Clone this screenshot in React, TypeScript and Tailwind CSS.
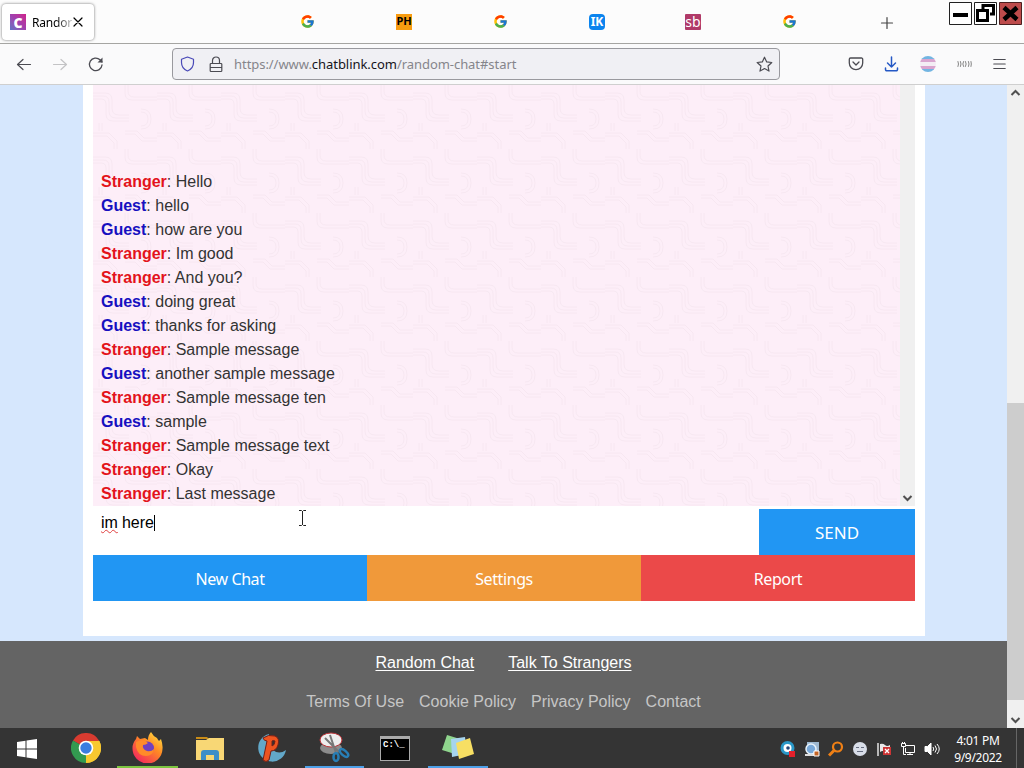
import React from "react";
import { FcGoogle } from "react-icons/fc";

interface Message {
  from: "a" | "b";
  text: string;
}

const names = { a: "Stranger", b: "Guest" };

const messages: Message[] = [
  { from: "a", text: "Hello" },
  { from: "b", text: "hello" },
  { from: "b", text: "how are you" },
  { from: "a", text: "Im good" },
  { from: "a", text: "And you?" },
  { from: "b", text: "doing great" },
  { from: "b", text: "thanks for asking" },
  { from: "a", text: "Sample message" },
  { from: "b", text: "another sample message" },
  { from: "a", text: "Sample message ten" },
  { from: "b", text: "sample" },
  { from: "a", text: "Sample message text" },
  { from: "a", text: "Okay" },
  { from: "a", text: "Last message" },
];

const stroke = {
  fill: "none",
  stroke: "currentColor",
  strokeLinecap: "round" as const,
  strokeLinejoin: "round" as const,
};

const TabBar: React.FC = () => (
  <div className="flex h-11 border-b border-[#a5a5a2] bg-[#fcfcfc]">
    <div className="mt-1 ml-0.5 flex h-9 w-[92px] items-center rounded bg-white pl-2 shadow-[0_0_3px_rgba(0,0,0,0.55)]">
      <span className="flex size-4 items-center justify-center bg-linear-to-tr from-[#5b72c4] via-[#a13fae] to-[#d01c8b] text-[14px] font-black text-white">
        C
      </span>
      <span className="ml-1.5 w-[41px] bg-linear-to-r from-black from-50% to-[#ddd] bg-clip-text pt-0.5 text-[12px] tracking-[-0.2px] whitespace-nowrap text-transparent">
        Randor
      </span>
      <svg width="10" height="10" viewBox="0 0 10 10" {...stroke}>
        <path d="M1 1l8 8M9 1l-8 8" strokeWidth="1.2" />
      </svg>
    </div>
    <div className="ml-[205px] flex h-[43px] items-center">
      <span className="flex w-[97px] pl-px"><FcGoogle size={15} /></span>
      <span className="flex w-[96px]">
        <span className="flex size-4 items-center justify-center bg-[#f89c10] text-[11px] font-bold">PH</span>
      </span>
      <span className="flex w-[97px] pl-px"><FcGoogle size={15} /></span>
      <span className="flex w-[96px]">
        <span className="flex size-4 items-center justify-center rounded-sm bg-[#0b84ee] text-[12px] font-bold text-white">IK</span>
      </span>
      <span className="flex w-[96px]">
        <span className="flex size-4 items-center justify-center rounded-[1px] bg-[#b03a68] text-[14px] text-white">sb</span>
      </span>
      <span className="flex w-[99px] pl-px"><FcGoogle size={15} /></span>
      <svg width="14" height="14" viewBox="0 0 14 14" className="mt-0.5 text-[#444]" {...stroke}>
        <path d="M7 1.500v11M1.500 7h11" strokeWidth="1.2" />
      </svg>
    </div>
    <div className="mt-0.5 ml-auto flex gap-0.5 pr-0.5">
      <svg width="23" height="23" viewBox="0 0 23 23">
        <path d="M.5.5h22v22H.5z" fill="#fff" stroke="#222" />
        <path d="M4 11h15v4H4z" />
      </svg>
      <svg width="23" height="23" viewBox="0 0 23 23" fill="none">
        <path d="M.5.5h22v22H.5z" fill="#fff" stroke="#222" />
        <path d="M9 7V3.5h10.5V12H16M3.5 8.5h10v10h-10z" stroke="#000" strokeWidth="3" />
      </svg>
      <svg width="23" height="23" viewBox="0 0 23 23">
        <path d="M.5.5h22v22H.5z" fill="#bd4b4b" stroke="#4b2020" />
        <path d="M5 5.5l13 12M18 5.5l-13 12" stroke="#000" strokeWidth="4.5" />
      </svg>
    </div>
  </div>
);

const Toolbar: React.FC = () => (
  <div className="flex h-[41px] items-center border-b border-[#cfcfcf] bg-[#fafafb] text-[#4b4b52]">
    <svg width="16" height="16" viewBox="0 0 16 16" className="ml-4" {...stroke}>
      <path d="M14.500 8.500h-13M7 3.500l-5.500 5 5.500 5" strokeWidth="1.2" />
    </svg>
    <svg width="16" height="16" viewBox="0 0 16 16" className="ml-5 text-[#c3c3c5]" {...stroke}>
      <path d="M1.500 8.500h13M9 3.500l5.500 5-5.500 5" strokeWidth="1.2" />
    </svg>
    <svg width="16" height="16" viewBox="0 0 16 16" className="ml-5" {...stroke}>
      <path d="M14 9a6.300 6.300 0 1 1-2-5.300L14 6" strokeWidth="1.3" />
      <path d="M14.500 1.500V6.500h-5z" fill="currentColor" stroke="none" />
    </svg>
    <div className="ml-[68px] flex h-8 w-[608px] items-center rounded border border-[#99999e] bg-[#f0f0f4] pl-[7px]">
      <svg width="15" height="16" viewBox="0 0 15 16" className="text-[#4a4ab8]" {...stroke}>
        <path d="M7.500 1l6 2.200v3.300c0 4-2.300 7-6 8.500-3.700-1.500-6-4.500-6-8.500V3.200z" strokeWidth="1.200" />
      </svg>
      <svg width="14" height="17" viewBox="0 0 14 17" className="ml-3.5" {...stroke}>
        <path d="M2 7.500h10a.8.800 0 0 1 .8.800v6.400a.8.800 0 0 1-.8.800H2a.8.800 0 0 1-.8-.800V8.300A.8.800 0 0 1 2 7.500zM3.500 7.500V4.500a3.500 3.500 0 0 1 7 0v3M1.500 11.500h11" strokeWidth="1.200" />
      </svg>
      <span className="ml-[11px] pt-0.5 text-[13px] tracking-[-0.05px] whitespace-nowrap text-[#85858b]">
        https://www.<span className="text-[#15141a]">chatblink.com</span>/random-chat#start
      </span>
      <svg width="17" height="17" viewBox="0 0 17 17" className="mr-1.5 ml-auto" {...stroke}>
        <path d="M8.500 1.200l2.200 4.700 5.100.6-3.800 3.500 1 5.100-4.500-2.500L4 15.100l1-5.100L1.200 6.500l5.100-.6z" strokeWidth="1.200" />
      </svg>
    </div>
    <svg width="16" height="14" viewBox="0 0 16 14" className="ml-[68px]" {...stroke}>
      <path d="M2.500 1h11a1.200 1.200 0 0 1 1.200 1.200V6a6.700 6.700 0 0 1-13.400 0V2.200A1.200 1.200 0 0 1 2.500 1zM5 5l3 3 3-3" strokeWidth="1.300" />
    </svg>
    <svg width="16" height="16" viewBox="0 0 16 16" className="ml-5 text-[#2458c5]" {...stroke}>
      <path d="M7.500 1v10M3.500 7l4 4 4-4M1.500 12v1.500a1.200 1.200 0 0 0 1.200 1.200h9.600a1.200 1.200 0 0 0 1.200-1.200V12" strokeWidth="1.500" />
    </svg>
    <span className="ml-5 size-4 overflow-hidden rounded-full">
      <span className="block h-[3px] bg-[#72b5e2]" />
      <span className="block h-[3px] bg-[#d9a5cf]" />
      <span className="block h-1 bg-[#f3edf4]" />
      <span className="block h-[3px] bg-[#d9a5cf]" />
      <span className="block h-[3px] bg-[#72b5e2]" />
    </span>
    <svg width="15" height="8" viewBox="0 0 15 8" className="ml-[21px] text-[#777]" {...stroke}>
      <path d="M1 1.500q1.200 2.500 0 5M3.500 1.500q1.200 2.500 0 5M6.500 1.500q-1.500 2.500 0 5M8.500 1.500q1.500 2.500 0 5M11.500 1.500q1.200 2.500 0 5M14 1.500q.8 2.500 0 5" strokeWidth=".9" />
    </svg>
    <svg width="13" height="12" viewBox="0 0 13 12" className="ml-[21px]" {...stroke}>
      <path d="M.8 1.500h11.400M.8 6h11.400M.8 10.500h11.400" strokeWidth="1.200" />
    </svg>
  </div>
);

const Chevron: React.FC<{ up?: boolean }> = ({ up }) => (
  <svg width="11" height="8" viewBox="0 0 11 8" fill="none" stroke="#505050" strokeWidth="2">
    <path d={up ? "M1.500 6l4-4 4 4" : "M1.500 2l4 4 4-4"} />
  </svg>
);

// faint maze lines tiled behind the messages
const ChatPattern: React.FC = () => (
  <svg className="absolute inset-0 h-full w-full">
    <defs>
      <pattern id="maze" width="64" height="64" patternUnits="userSpaceOnUse">
        <g fill="none" stroke="#f5e4ef" strokeWidth=".8">
          <path d="M0 8h12q7 0 7 7v8q0 7 7 7h10M0 11h10q6 0 6 6v9q0 7 7 7h13M0 14h8q5 0 5 5v10q0 7 7 7h16" />
          <path d="M32 0v8q0 7 7 7h25M35 0v6q0 6 6 6h23M48 24q10 0 10 10t-10 10M48 27q7 0 7 7t-7 7" />
          <path d="M0 48h16l8 8v8M0 51h14l7 7v6M32 46h12l7 7h13M32 49h10l7 7h15M6 38v8M9 38v8" />
        </g>
      </pattern>
    </defs>
    <rect width="100%" height="100%" fill="url(#maze)" />
  </svg>
);

const Chat: React.FC = () => (
  <div className="flex h-[421px] w-[822px]">
    <div className="relative w-[807px] bg-[#fdeef8] pt-[85px] pl-2">
      <ChatPattern />
      <div className="relative">
        {messages.map((m, i) => (
          <p key={i} className="h-6 text-base leading-6 text-[#333]">
            <b className={m.from === "a" ? "text-[#e3131b]" : "text-[#1610c0]"}>{names[m.from]}</b>: {m.text}
          </p>
        ))}
      </div>
    </div>
    <div className="flex w-[15px] items-end justify-center bg-[#f0f0f0] pb-1">
      <Chevron />
    </div>
  </div>
);

const Page: React.FC = () => (
  <div className="h-[643px] w-[1007px] bg-[#d6e7fd] font-['Liberation_Sans',sans-serif]">
    <div className="ml-[83px] h-[551px] w-[842px] bg-white px-2.5">
      <Chat />
      <div className="flex h-[49px] pt-[3px]">
        <div className="flex w-[666px] pt-0.5 pl-2 text-base leading-6 text-black">
          <span className="h-6 underline decoration-[#e04040] decoration-wavy decoration-1 underline-offset-1">im</span>
          <span className="ml-1">here</span>
          <span className="mt-1 h-4 w-px bg-black" />
          <svg width="9" height="16" viewBox="0 0 9 16" className="-mt-px ml-[143px]" fill="none" stroke="#222">
            <path d="M1 .5h2.500l1 1 1-1H8M4.500 1v14M1 15.500h2.500l1-1 1 1H8" />
          </svg>
        </div>
        <button className="w-[156px] bg-[#2196f3] pt-0.5 font-['Noto_Sans',sans-serif] text-[17px] text-white">SEND</button>
      </div>
      <div className="grid h-[46px] grid-cols-3 font-['Noto_Sans',sans-serif] text-base tracking-tight text-white">
        <button className="bg-[#2196f3] pt-0.5">New Chat</button>
        <button className="bg-[#f0993a] pt-0.5">Settings</button>
        <button className="bg-[#eb4949] pt-0.5">Report</button>
      </div>
    </div>
    <footer className="mt-[5px] h-[87px] bg-[#646464] text-base leading-6">
      <div className="flex justify-center gap-[34px] pt-2.5 text-white underline underline-offset-2">
        <span>Random Chat</span>
        <span>Talk To Strangers</span>
      </div>
      <div className="mt-[15px] flex justify-center gap-[15px] text-[#c6c6c6]">
        <span>Terms Of Use</span>
        <span>Cookie Policy</span>
        <span>Privacy Policy</span>
        <span>Contact</span>
      </div>
    </footer>
  </div>
);

const Taskbar: React.FC = () => (
  <div className="flex h-10 bg-[#343434] text-white">
    <div className="flex w-[55px] items-center justify-center pt-0.5">
      <svg width="20" height="20" viewBox="0 0 20 20" fill="#fff" className="-ml-0.5">
        <path d="M0 3l8.500-1.200v7.700H0zM9.500 1.600L20 0v9.500H9.500zM0 10.500h8.500v7.700L0 17zM9.500 10.500H20V20L9.500 18.400z" />
      </svg>
    </div>
    <div className="flex w-[62px] items-center justify-center">
      <svg width="30" height="30" viewBox="0 0 30 30">
        <path d="M15 15L2 7.500A15 15 0 0 1 28 7.500z" fill="#d83b30" />
        <path d="M15 15L28 7.500A15 15 0 0 1 15 30z" fill="#f8c82f" />
        <path d="M15 15v15A15 15 0 0 1 2 7.500z" fill="#339a50" />
        <path d="M15 8h13.300A15 15 0 0 1 15 30l6-12z" fill="#f8c82f" />
        <circle cx="15" cy="15" r="7.300" fill="#fff" />
        <circle cx="15" cy="15" r="5.700" fill="#3b7de0" />
      </svg>
    </div>
    <div className="flex w-[61px] items-center justify-center border-b-2 border-[#7cc540]">
      <svg width="31" height="31" viewBox="0 0 31 31">
        <defs>
          <linearGradient id="fox" x1="1" y1="0" x2=".2" y2="1">
            <stop offset="0" stopColor="#fff047" />
            <stop offset=".45" stopColor="#ff8a24" />
            <stop offset="1" stopColor="#f32360" />
          </linearGradient>
        </defs>
        <path d="M19 0q2 4 6 6 1 2 2 3l2-2q2 6 1.500 10A15 15 0 0 1 .5 16Q.5 11 4 7l1-3 3 3 5-1 3 2q0-5 3-8z" fill="url(#fox)" />
        <circle cx="15.500" cy="16" r="6.500" fill="#7040be" />
        <path d="M4 10q7-4 12 1-2 2-5 2-1 4 4 6 4 1 7-2-1 7-8 7-8 0-10-9z" fill="#ff8b29" />
      </svg>
    </div>
    <div className="flex w-[63px] items-center justify-center">
      <svg width="28" height="25" viewBox="0 0 28 25">
        <path d="M0 1h11l2 2H0z" fill="#c98c17" />
        <path d="M0 4h10l3-2h15v22H0z" fill="#f8d775" />
        <path d="M5 24v-7q0-3 3-3h12q3 0 3 3v7h-5v-5h-8v5z" fill="#3d8ec8" />
      </svg>
    </div>
    <div className="flex w-[61px] items-center justify-center">
      <svg width="31" height="31" viewBox="0 0 31 31">
        <path d="M13 1A14 14 0 1 0 30 17q-7 5-13 0T13 1z" fill="#62a8c9" />
        <path d="M7 27l4-19q-3 0-4-3 5-4 12-2 5 2 3 9-2 6-7 6l-2 9q-3 3-6 0zm9-14q3-1 3-5-2-1-3 0z" fill="#ee5420" stroke="#742018" />
      </svg>
    </div>
    <div className="ml-[3px] flex w-[59px] items-center justify-center border-b-2 border-[#4da0e8]">
      <svg width="31" height="31" viewBox="0 0 31 31" fill="none">
        <ellipse cx="12" cy="16" rx="11" ry="6" fill="#8c8c8c" />
        <ellipse cx="12" cy="8" rx="11" ry="7" fill="#eee" stroke="#bc3338" />
        <path d="M6 6l14 14M11 3l6 18" stroke="#777" strokeWidth="2" />
        <ellipse cx="17" cy="25" rx="2.500" ry="4" stroke="#287eb5" strokeWidth="2.500" />
        <ellipse cx="25" cy="21" rx="2.500" ry="5" transform="rotate(-50 25 21)" stroke="#287eb5" strokeWidth="2.500" />
      </svg>
    </div>
    <div className="flex w-[62px] items-center justify-center">
      <span className="h-[25px] w-[30px] border border-[#aaa] border-t-[3px] bg-black pl-0.5 font-['Liberation_Mono',monospace] text-[9px] leading-[13px] font-bold">
        C:\_
      </span>
    </div>
    <div className="ml-0.5 flex w-[60px] items-center justify-center border-b-2 border-[#4da0e8]">
      <svg width="32" height="25" viewBox="0 0 32 25">
        <path d="M5 0l13 4-5 15L0 15z" fill="#8fd58d" />
        <path d="M9 4l14-2 2 17-15 3z" fill="#a6d4ee" />
        <path d="M14 8l14-5 4 16-15 5z" fill="#f7df63" />
      </svg>
    </div>
    <div className="ml-auto flex items-center gap-2 pt-0.5">
      <svg width="16" height="16" viewBox="0 0 16 16">
        <circle cx="7.500" cy="7" r="7" fill="#2a98c8" />
        <circle cx="7.500" cy="7" r="4" fill="#fff" />
        <circle cx="8" cy="7" r="1.800" fill="#247" />
        <path d="M9 10h6v6H9z" fill="#e3202b" />
      </svg>
      <svg width="16" height="16" viewBox="0 0 16 16">
        <path d="M3 1h12v10H3z" fill="#9db8d0" />
        <circle cx="7" cy="8" r="5" fill="#78a8d8" stroke="#e8f2fa" strokeWidth="1.500" />
        <path d="M1 13h9v2H1z" fill="#ddd" />
        <path d="M10 10h5v5h-5z" fill="#c46424" stroke="#fff" />
      </svg>
      <svg width="16" height="16" viewBox="0 0 16 16" fill="none" stroke="#f08015">
        <circle cx="9.500" cy="6" r="4.500" strokeWidth="2.200" />
        <path d="M6 9.500l-5 5" strokeWidth="3" />
      </svg>
      <svg width="16" height="16" viewBox="0 0 16 16">
        <circle cx="8" cy="8" r="7" fill="#d8dde8" />
        <path d="M4 6.500h3M9 6.500h3M5 10.500h6" stroke="#666d80" />
      </svg>
      <svg width="16" height="16" viewBox="0 0 16 16">
        <path d="M2 2v13" stroke="#fff" strokeWidth="1.300" />
        <path d="M4 3q3-1 5 1t5 0v7q-3 2-5 0t-5 0z" fill="#e9e9e9" />
        <path d="M7 6h8v8H7z" fill="#cc3434" />
        <path d="M9 8l4 4M13 8l-4 4" stroke="#fff" strokeWidth="1.300" />
      </svg>
      <svg width="16" height="16" viewBox="0 0 16 16" fill="none" stroke="#fff">
        <path d="M6 4.500h8.500v7H5.500V7M7 13.500h6M10 12v2M1.500 2.500h4v3h-4zM2.500 1v2M4.500 1v2M3.500 6v7.500H6" />
      </svg>
      <svg width="16" height="16" viewBox="0 0 16 16" fill="none" stroke="#fff">
        <path d="M1 5.500h2.500L7 2v12l-3.500-3.500H1z" fill="#fff" />
        <path d="M9 6q1.500 2 0 4M11 4.500q3 3.500 0 7M13 3q4.500 5 0 10" />
      </svg>
    </div>
    <div className="ml-3 w-[52px] pt-1 text-center text-[12px] leading-[17px] tracking-[-0.3px] whitespace-nowrap">
      <div>4:01 PM</div>
      <div>9/9/2022</div>
    </div>
    <div className="ml-3 w-2 border-l border-[#666]" />
  </div>
);

const App: React.FC = () => (
  <div className="h-[768px] w-[1024px] overflow-hidden font-['Noto_Sans',sans-serif]">
    <TabBar />
    <Toolbar />
    <div className="flex h-[643px]">
      <Page />
      <div className="flex w-[17px] flex-col items-center bg-[#f0f0f0] pt-1">
        <Chevron up />
        <div className="mt-[306px] h-[297px] w-full bg-[#cdcdcd]" />
        <div className="mt-4">
          <Chevron />
        </div>
      </div>
    </div>
    <Taskbar />
  </div>
);

export default App;
